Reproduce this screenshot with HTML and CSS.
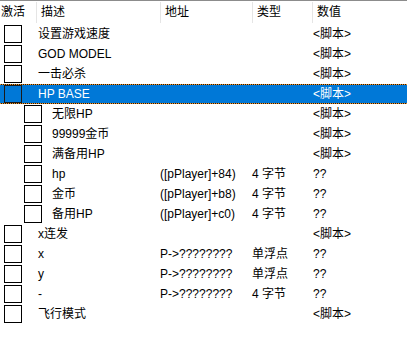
FILE: index.html
```html
<!DOCTYPE html>
<html lang="zh-CN">
<head>
  <meta charset="utf-8">
  <title>作弊表</title>
  <link rel="stylesheet" href="styles.css">
</head>
<body>
  <div class="list">
    <!-- Column headers -->
    <div class="head">
      <div class="hcell c-act">激活</div>
      <div class="hcell c-desc">描述</div>
      <div class="hcell c-addr">地址</div>
      <div class="hcell c-type">类型</div>
      <div class="hcell c-val">数值</div>
    </div>

    <!-- Entries -->
    <div class="row"><div class="name"><span class="box"></span>设置游戏速度</div><div></div><div></div><div>&lt;脚本&gt;</div></div>
    <div class="row"><div class="name"><span class="box"></span>GOD MODEL</div><div></div><div></div><div>&lt;脚本&gt;</div></div>
    <div class="row"><div class="name"><span class="box"></span>一击必杀</div><div></div><div></div><div>&lt;脚本&gt;</div></div>
    <div class="row selected"><div class="name"><span class="box"></span>HP BASE</div><div></div><div></div><div>&lt;脚本&gt;</div></div>
    <div class="row child"><div class="name"><span class="box"></span>无限HP</div><div></div><div></div><div>&lt;脚本&gt;</div></div>
    <div class="row child"><div class="name"><span class="box"></span>99999金币</div><div></div><div></div><div>&lt;脚本&gt;</div></div>
    <div class="row child"><div class="name"><span class="box"></span>满备用HP</div><div></div><div></div><div>&lt;脚本&gt;</div></div>
    <div class="row child"><div class="name"><span class="box"></span>hp</div><div>([pPlayer]+84)</div><div>4 字节</div><div>??</div></div>
    <div class="row child"><div class="name"><span class="box"></span>金币</div><div>([pPlayer]+b8)</div><div>4 字节</div><div>??</div></div>
    <div class="row child"><div class="name"><span class="box"></span>备用HP</div><div>([pPlayer]+c0)</div><div>4 字节</div><div>??</div></div>
    <div class="row"><div class="name"><span class="box"></span>x连发</div><div></div><div></div><div>&lt;脚本&gt;</div></div>
    <div class="row"><div class="name"><span class="box"></span>x</div><div>P-&gt;????????</div><div>单浮点</div><div>??</div></div>
    <div class="row"><div class="name"><span class="box"></span>y</div><div>P-&gt;????????</div><div>单浮点</div><div>??</div></div>
    <div class="row"><div class="name"><span class="box"></span>-</div><div>P-&gt;????????</div><div>4 字节</div><div>??</div></div>
    <div class="row"><div class="name"><span class="box"></span>飞行模式</div><div></div><div></div><div>&lt;脚本&gt;</div></div>
  </div>
</body>
</html>
```

FILE: styles.css
```css
/* Base */
body {
  margin: 0;
  background: #fff;
  color: #000;
  font-family: "Liberation Sans", "Noto Sans CJK SC", sans-serif;
  font-size: 12px;
}

.list {
  border-top: 1px solid #8c8c8c;
}

/* Header bar */
.head {
  display: grid;
  grid-template-columns: 36px 124px 92px 60px 1fr;
  height: 23px;
  line-height: 23px;
  white-space: nowrap;
}

.hcell {
  padding-left: 4px;
  border-left: 1px solid #e5e5e5;
  background-clip: padding-box;
}

.hcell.c-act {
  padding-left: 1px;
  border-left: none;
}

.hcell.c-desc {
  border-image: linear-gradient(transparent 2px, #e5e5e5 2px, #e5e5e5 21px, transparent 21px) 1;
}

.hcell.c-addr,
.hcell.c-type,
.hcell.c-val {
  border-image: linear-gradient(transparent 2px, #e5e5e5 2px, #e5e5e5 21px, transparent 21px) 1;
}

/* Entry rows */
.row {
  display: grid;
  grid-template-columns: 160px 92px 61px 1fr;
  height: 20px;
  line-height: 20px;
  white-space: nowrap;
  box-sizing: border-box;
}

.name {
  display: flex;
  align-items: center;
  gap: 16px;
  padding-left: 4px;
}

.row.child .name {
  padding-left: 24px;
  gap: 10px;
}

.box {
  flex: none;
  width: 18px;
  height: 18px;
  box-sizing: border-box;
  border: 1px solid #000;
  background: #fff;
}

/* Selected entry with focus rectangle */
.row.selected {
  background: #0078d7;
  color: #fff;
  position: relative;
}

.row.selected .box {
  background: #0078d7;
  border-color: #1a1a1a;
}

.row.selected::before,
.row.selected::after {
  content: "";
  position: absolute;
  left: 0;
  right: 0;
  height: 1px;
  background: repeating-linear-gradient(90deg, #f7931e 0 1px, #1a1a1a 1px 2px);
}

.row.selected::before { top: 0; }
.row.selected::after { bottom: 0; }
```
